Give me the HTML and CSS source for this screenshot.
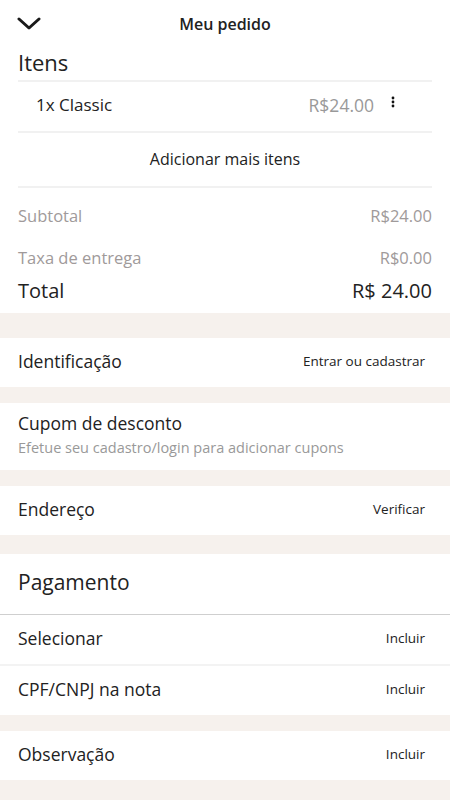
FILE: index.html
```html
<!DOCTYPE html>
<html lang="pt-BR">
<head>
    <meta charset="UTF-8">
    <title>Meu pedido</title>
    <link rel="stylesheet" href="styles.css">
</head>
<body>
    <div class="header">
        <svg class="voltar" width="24" height="14" viewBox="0 0 24 14">
            <path d="M2 2 L12 11 L22 2" fill="none" stroke="#1a1a1a" stroke-width="3" stroke-linecap="round" stroke-linejoin="round"/>
        </svg>
        <h1>Meu pedido</h1>
    </div>

    <div class="itens">
        <h2 class="titulo">Itens</h2>
        <div class="item">
            <span>1x Classic</span>
            <span class="preco">R$24.00</span>
            <svg class="mais" width="4" height="12" viewBox="0 0 4 12">
                <circle cx="2" cy="2" r="1.4" fill="#111"/>
                <circle cx="2" cy="6" r="1.4" fill="#111"/>
                <circle cx="2" cy="10" r="1.4" fill="#111"/>
            </svg>
        </div>
        <div class="adicionar">Adicionar mais itens</div>
        <div class="linha cinza">
            <span>Subtotal</span>
            <span>R$24.00</span>
        </div>
        <div class="linha cinza taxa">
            <span>Taxa de entrega</span>
            <span>R$0.00</span>
        </div>
        <div class="linha total">
            <span>Total</span>
            <span>R$ 24.00</span>
        </div>
    </div>

    <div class="bloco">
        <div class="opcao">
            <span>Identificação</span>
            <a href="#">Entrar ou cadastrar</a>
        </div>
    </div>

    <div class="bloco">
        <div class="cupom">
            <span>Cupom de desconto</span>
            <small>Efetue seu cadastro/login para adicionar cupons</small>
        </div>
    </div>

    <div class="bloco mais-espaco">
        <div class="opcao">
            <span>Endereço</span>
            <a href="#">Verificar</a>
        </div>
    </div>

    <div class="bloco">
        <h2 class="pagamento">Pagamento</h2>
        <div class="opcao">
            <span>Selecionar</span>
            <a href="#">Incluir</a>
        </div>
        <div class="opcao sep">
            <span>CPF/CNPJ na nota</span>
            <a href="#">Incluir</a>
        </div>
    </div>

    <div class="bloco">
        <div class="opcao">
            <span>Observação</span>
            <a href="#">Incluir</a>
        </div>
    </div>
</body>
</html>
```

FILE: styles.css
```css
body {
    font-family: 'Open Sans', sans-serif;
    margin: 0;
    background-color: #f6f1ed;
    color: #222;
}
.header {
    background-color: white;
    height: 48px;
    display: flex;
    align-items: center;
    justify-content: center;
    position: relative;
}
.voltar {
    position: absolute;
    left: 17px;
    top: 17px;
}
.header h1 {
    margin: 0;
    font-size: 16px;
    font-weight: 600;
}
.itens {
    background-color: white;
    padding: 0 18px 9px;
    margin-bottom: 25px;
}
.titulo {
    margin: 0;
    font-size: 22px;
    font-weight: 400;
    line-height: 28px;
    padding-bottom: 4px;
    border-bottom: 2px solid #f1f1f1;
}
.item {
    display: flex;
    align-items: center;
    height: 45px;
    padding: 0 37px 4px 18px;
    font-size: 17px;
    border-bottom: 2px solid #f1f1f1;
}
.item .preco {
    margin-left: auto;
    color: #999;
    font-size: 17.5px;
    margin-right: 17px;
}
.item .mais {
    margin-top: -6px;
}
.adicionar {
    text-align: center;
    font-size: 16px;
    height: 53px;
    line-height: 53px;
    border-bottom: 2px solid #f1f1f1;
}
.linha {
    display: flex;
    justify-content: space-between;
}
.linha.cinza {
    color: #a09a9a;
    font-size: 16.5px;
    height: 39px;
    align-items: flex-end;
}
.linha.taxa {
    height: 42px;
}
.linha.total {
    font-size: 20px;
    height: 35px;
    align-items: flex-end;
}
.bloco {
    background-color: white;
    margin-bottom: 16px;
}
.bloco.mais-espaco {
    margin-bottom: 19px;
}
.opcao {
    display: flex;
    justify-content: space-between;
    align-items: center;
    height: 45px;
    padding: 0 25px 4px 18px;
    font-size: 17.5px;
}
.opcao a {
    color: #222;
    text-decoration: none;
    font-size: 13.5px;
}
.opcao.sep {
    border-top: 2px solid #f3f3f3;
}
.cupom {
    display: flex;
    flex-direction: column;
    padding: 8px 18px 13px;
    font-size: 17.5px;
}
.cupom small {
    color: #999;
    font-size: 14.5px;
    margin-top: 3px;
}
.pagamento {
    margin: 0;
    padding: 0 18px 4px;
    height: 56px;
    line-height: 56px;
    font-size: 21px;
    font-weight: 400;
    border-bottom: 1px solid #cfcfcf;
}
```
